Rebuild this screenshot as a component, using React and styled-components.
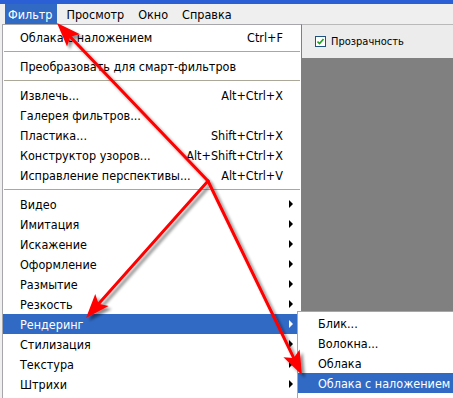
import React from "react";
import styled, { createGlobalStyle } from "styled-components";

const GlobalStyle = createGlobalStyle`
   html, body {
      margin: 0;
      padding: 0;
      background: #808080;
   }
   body {
      font-family: "DejaVu Sans Condensed", "DejaVu Sans", Verdana, sans-serif;
   }
`;

const Screen = styled.div`
   position: relative;
   width: 453px;
   height: 398px;
   overflow: hidden;
   background: #efefef;
   display: flex;
   flex-direction: column;
`;

const TitleStrip = styled.div`
   height: 4px;
   background: #2b5fd6;
`;

const MenuBar = styled.div`
   height: 20px;
   display: flex;
   align-items: stretch;
   gap: 7px;
   padding-left: 5px;
   background: #efefef;
`;

const MenuBarItem = styled.div`
   display: flex;
   align-items: center;
   padding: 0 4px 0 3px;
   font-size: 12.5px;
   color: ${(props) => (props.active ? "#ffffff" : "#000000")};
   background: ${(props) => (props.active ? "#316ac5" : "transparent")};
`;

const Workspace = styled.div`
   flex: 1;
   display: flex;
   padding-left: 2px;
`;

const Dropdown = styled.div`
   width: 298px;
   background: #ffffff;
   border-left: 1px solid #a7a6aa;
   border-top: 1px solid #a7a6aa;
   border-right: 1px solid #808080;
   padding-top: 2px;
   display: flex;
   flex-direction: column;
`;

const Item = styled.div`
   height: 20px;
   flex-shrink: 0;
   display: flex;
   align-items: center;
   padding: 0 8px 0 17px;
   font-size: 12.5px;
   color: ${(props) => (props.active ? "#ffffff" : "#000000")};
   background: ${(props) => (props.active ? "#316ac5" : "transparent")};
`;

const Label = styled.span`
   flex: 1;
   white-space: nowrap;
`;

const Shortcut = styled.span`
   white-space: nowrap;
   margin-right: 10px;
`;

const SubArrow = styled.span`
   width: 0;
   height: 0;
   border-top: 4px solid transparent;
   border-bottom: 4px solid transparent;
   border-left: 4px solid ${(props) => (props.active ? "#ffffff" : "#000000")};
`;

const Separator = styled.div`
   height: 9px;
   flex-shrink: 0;
   display: flex;
   align-items: center;
   padding: 0 1px;
   &::after {
      content: "";
      flex: 1;
      height: 1px;
      background: #aca899;
   }
`;

const RightPane = styled.div`
   flex: 1;
   display: flex;
   flex-direction: column;
`;

const OptionsBar = styled.div`
   height: 33px;
   border-top: 1px solid #b9b9b9;
   background: #ececec;
   display: flex;
   align-items: center;
   padding-left: 13px;
   gap: 5px;
   font-size: 11px;
   color: #000;
`;

const CheckBox = styled.span`
   width: 9px;
   height: 9px;
   border: 1px solid #1c5180;
   background: #ffffff;
   display: flex;
   align-items: center;
   justify-content: center;
`;

const Canvas = styled.div`
   flex: 1;
   background: #808080;
`;

const SubMenu = styled.div`
   position: absolute;
   left: 297px;
   top: 311px;
   width: 170px;
   height: 100px;
   background: #ffffff;
   border-left: 1px solid #a7a6aa;
   border-top: 1px solid #a7a6aa;
   padding-top: 1px;
   display: flex;
   flex-direction: column;
`;

const SubItem = styled(Item)`
   padding-left: 20px;
`;

const Overlay = styled.svg`
   position: absolute;
   left: 0;
   top: 0;
   pointer-events: none;
`;

const menuItems = [
   { label: "Облака с наложением", shortcut: "Ctrl+F" },
   "sep",
   { label: "Преобразовать для смарт-фильтров" },
   "sep",
   { label: "Извлечь...", shortcut: "Alt+Ctrl+X" },
   { label: "Галерея фильтров..." },
   { label: "Пластика...", shortcut: "Shift+Ctrl+X" },
   { label: "Конструктор узоров...", shortcut: "Alt+Shift+Ctrl+X" },
   { label: "Исправление перспективы...", shortcut: "Alt+Ctrl+V" },
   "sep",
   { label: "Видео", sub: true },
   { label: "Имитация", sub: true },
   { label: "Искажение", sub: true },
   { label: "Оформление", sub: true },
   { label: "Размытие", sub: true },
   { label: "Резкость", sub: true },
   { label: "Рендеринг", sub: true, active: true },
   { label: "Стилизация", sub: true },
   { label: "Текстура", sub: true },
   { label: "Штрихи", sub: true },
];

const subItems = ["Блик...", "Волокна...", "Облака", "Облака с наложением"];

// arrowhead polygon pointing at the tip, coming from (fx, fy)
const headPoints = (fx, fy, tx, ty) => {
   const len = Math.hypot(tx - fx, ty - fy);
   const ux = (tx - fx) / len;
   const uy = (ty - fy) / len;
   const px = -uy;
   const py = ux;
   const L = 24;
   const W = 9;
   const back = [tx - ux * L, ty - uy * L];
   const neck = [tx - ux * (L - 5), ty - uy * (L - 5)];
   const pts = [
      [tx, ty],
      [back[0] + px * W, back[1] + py * W],
      [neck[0], neck[1]],
      [back[0] - px * W, back[1] - py * W],
   ];
   return pts.map((p) => p.join(",")).join(" ");
};

const hub = [208, 181];
const arrows = [
   [57, 23],
   [86, 318],
   [302, 375],
];

const Arrows = () => (
   <Overlay width="453" height="398" viewBox="0 0 453 398">
      <defs>
         <filter id="shadow" x="-10%" y="-10%" width="130%" height="130%">
            <feGaussianBlur in="SourceAlpha" stdDeviation="1.6" />
            <feOffset dx="3" dy="3" result="blur" />
            <feComponentTransfer>
               <feFuncA type="linear" slope="0.45" />
            </feComponentTransfer>
            <feMerge>
               <feMergeNode />
               <feMergeNode in="SourceGraphic" />
            </feMerge>
         </filter>
      </defs>
      <g filter="url(#shadow)" fill="#ff0000" stroke="#ff0000">
         {arrows.map(([tx, ty], i) => {
            const len = Math.hypot(tx - hub[0], ty - hub[1]);
            const ex = tx - ((tx - hub[0]) / len) * 16;
            const ey = ty - ((ty - hub[1]) / len) * 16;
            return (
               <g key={i}>
                  <line
                     x1={hub[0]}
                     y1={hub[1]}
                     x2={ex}
                     y2={ey}
                     strokeWidth="3"
                     strokeLinecap="round"
                  />
                  <polygon points={headPoints(hub[0], hub[1], tx, ty)} stroke="none" />
               </g>
            );
         })}
      </g>
   </Overlay>
);

const App = () => {
   return (
      <>
         <GlobalStyle />
         <Screen>
            <TitleStrip />
            <MenuBar>
               <MenuBarItem active>Фильтр</MenuBarItem>
               <MenuBarItem>Просмотр</MenuBarItem>
               <MenuBarItem>Окно</MenuBarItem>
               <MenuBarItem>Справка</MenuBarItem>
            </MenuBar>
            <Workspace>
               <Dropdown>
                  {menuItems.map((item, i) =>
                     item === "sep" ? (
                        <Separator key={i} />
                     ) : (
                        <Item key={i} active={item.active}>
                           <Label>{item.label}</Label>
                           {item.shortcut && <Shortcut>{item.shortcut}</Shortcut>}
                           {item.sub && <SubArrow active={item.active} />}
                        </Item>
                     )
                  )}
               </Dropdown>
               <RightPane>
                  <OptionsBar>
                     <CheckBox>
                        <svg width="7" height="7" viewBox="0 0 7 7">
                           <path d="M0.5 3.5 L2.5 5.5 L6.5 1" stroke="#21a121" strokeWidth="1.6" fill="none" />
                        </svg>
                     </CheckBox>
                     Прозрачность
                  </OptionsBar>
                  <Canvas />
               </RightPane>
            </Workspace>
            <SubMenu>
               {subItems.map((label, i) => (
                  <SubItem key={i} active={i === 3}>
                     <Label>{label}</Label>
                  </SubItem>
               ))}
            </SubMenu>
            <Arrows />
         </Screen>
      </>
   );
};

export default App;
